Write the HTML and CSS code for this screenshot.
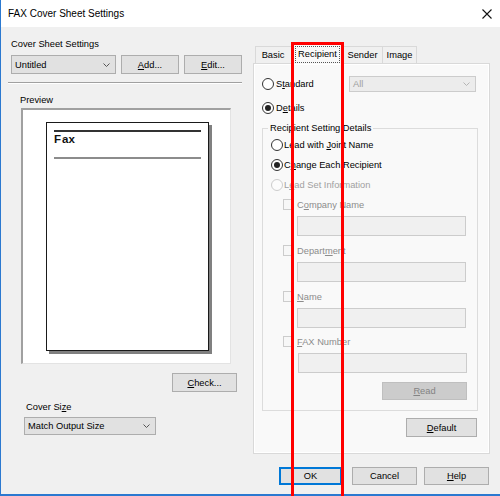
FILE: index.html
```html
<!DOCTYPE html>
<html>
<head>
<meta charset="utf-8">
<title>FAX Cover Sheet Settings</title>
<link rel="stylesheet" href="styles.css">
</head>
<body>
<div class="window">
  <div class="titlebar">
    <span class="title">FAX Cover Sheet Settings</span>
    <svg class="close" width="10" height="10" viewBox="0 0 10 10"><path d="M0.5 0.5L9.5 9.5M9.5 0.5L0.5 9.5" stroke="#111" stroke-width="1.1" fill="none"/></svg>
  </div>
  <div class="main">
    <div class="left">
      <div class="label lbl-cover">Cover Sheet Settings</div>
      <div class="row r-cover">
        <div class="select sel-untitled"><span class="seltext">Untitled</span><svg class="chev" width="7" height="4" viewBox="0 0 7 4"><polyline points="0.5,0.5 3.5,3.5 6.5,0.5" fill="none" stroke="#555" stroke-width="1"/></svg></div>
        <div class="btn btn-add"><u>A</u>dd...</div>
        <div class="btn btn-edit"><u>E</u>dit...</div>
      </div>
      <div class="sep"></div>
      <div class="label lbl-preview">Preview</div>
      <div class="preview">
        <div class="page">
          <div class="pline dark"></div>
          <div class="fax"><span class="fax-f">F</span>ax</div>
          <div class="pline gray"></div>
        </div>
      </div>
      <div class="btn btn-check"><u>C</u>heck...</div>
      <div class="label lbl-size">Cover Si<u>z</u>e</div>
      <div class="select sel-size"><span class="seltext">Match Output Size</span><svg class="chev" width="7" height="4" viewBox="0 0 7 4"><polyline points="0.5,0.5 3.5,3.5 6.5,0.5" fill="none" stroke="#555" stroke-width="1"/></svg></div>
    </div>
    <div class="right">
      <div class="tabs">
        <div class="tab t-basic">Basic</div>
        <div class="tab t-recip active"><span class="focus">Recipient</span></div>
        <div class="tab t-sender">Sender</div>
        <div class="tab t-image">Image</div>
      </div>
      <div class="panel">
        <div class="opt r-standard">
          <span class="radio"></span><span class="otext">S<u>t</u>andard</span>
          <div class="select sel-all disabled"><span class="seltext">All</span><svg class="chev" width="7" height="4" viewBox="0 0 7 4"><polyline points="0.5,0.5 3.5,3.5 6.5,0.5" fill="none" stroke="#b5b5b5" stroke-width="1"/></svg></div>
        </div>
        <div class="opt r-details"><span class="radio checked"></span><span class="otext">D<u>e</u>tails</span></div>
        <fieldset class="group">
          <legend>Recipient Setting Details</legend>
          <div class="group-body">
            <div class="opt sub o-joint"><span class="radio"></span><span class="otext">Lead with <u>J</u>oint Name</span></div>
            <div class="opt sub o-change"><span class="radio checked"></span><span class="otext">C<u>h</u>ange Each Recipient</span></div>
            <div class="opt sub o-set disabled"><span class="radio"></span><span class="otext">L<u>e</u>ad Set Information</span></div>
            <div class="chk c-first"><span class="box"></span><span class="ctext">C<u>o</u>mpany Name</span></div>
            <div class="field"></div>
            <div class="chk"><span class="box"></span><span class="ctext">Depart<u>m</u>ent</span></div>
            <div class="field"></div>
            <div class="chk"><span class="box"></span><span class="ctext"><u>N</u>ame</span></div>
            <div class="field"></div>
            <div class="chk c-fax"><span class="box"></span><span class="ctext"><u>F</u>AX Number</span></div>
            <div class="field f-fax"></div>
            <div class="btn btn-read disabled"><u>R</u>ead</div>
          </div>
        </fieldset>
        <div class="btn btn-default"><u>D</u>efault</div>
      </div>
      <div class="buttons">
        <div class="btn btn-ok">OK</div>
        <div class="btn btn-cancel">Cancel</div>
        <div class="btn btn-help"><u>H</u>elp</div>
      </div>
    </div>
  </div>
  <div class="highlight"></div>
</div>
</body>
</html>
```
FILE: styles.css
```css
* { box-sizing: border-box; }
html, body { margin: 0; padding: 0; }
body {
  width: 500px;
  height: 496px;
  overflow: hidden;
  font-family: "Liberation Sans", Arial, sans-serif;
  font-size: 9.3px;
  color: #000;
  background: #f0f0f0;
}
u { text-decoration: underline; text-underline-offset: 1px; }

.window {
  position: relative;
  width: 500px;
  height: 496px;
  border-left: 1px solid #2b79d0;
  border-bottom: 2px solid #2b79d0;
  background: #f0f0f0;
  display: flex;
  flex-direction: column;
}

.titlebar {
  height: 27px;
  background: #fff;
  display: flex;
  align-items: center;
  justify-content: space-between;
  padding: 0 8px 0 7px;
}
.title { font-size: 10px; color: #000; }
.close { display: block; margin-top: 1px; }

.main {
  display: flex;
  flex: 1;
}

/* left column */
.left {
  width: 252px;
  display: flex;
  flex-direction: column;
  align-items: flex-start;
  padding-left: 10px;
}
.label { height: 12px; line-height: 12px; white-space: nowrap; }
.lbl-cover { margin-top: 11px; }
.row { display: flex; }
.r-cover { margin-top: 5px; height: 19px; }

.select {
  display: flex;
  align-items: center;
  background: #e1e1e1;
  border: 1px solid #adadad;
  height: 19px;
}
.seltext { flex: 1; padding-left: 3px; white-space: nowrap; }
.chev { display: block; margin-right: 5px; }
.sel-untitled { width: 105px; }
.sel-size { width: 132px; height: 18px; margin-top: 4px; margin-left: 13px; }
.select.disabled { background: #ececec; border-color: #cccccc; color: #a0a0a0; }

.btn {
  display: flex;
  align-items: center;
  justify-content: center;
  background: #e1e1e1;
  border: 1px solid #adadad;
  height: 19px;
  white-space: nowrap;
}
.btn.disabled { background: #cccccc; border-color: #bfbfbf; color: #838383; }
.btn-add { width: 58px; margin-left: 5px; }
.btn-edit { width: 58px; margin-left: 5px; }

.sep {
  margin-top: 8px;
  margin-left: -3px;
  width: 234px;
  height: 2px;
  border-top: 1px solid #a0a0a0;
  border-bottom: 1px solid #fff;
}
.lbl-preview { margin-top: 10px; margin-left: 9px; }

.preview {
  margin-top: 2px;
  margin-left: 10px;
  width: 210px;
  height: 256px;
  background: #fff;
  border-top: 2px solid #a0a0a0;
  border-left: 2px solid #a0a0a0;
  border-right: 1px solid #e3e3e3;
  border-bottom: 1px solid #e3e3e3;
  padding: 12px 0 0 23px;
}
.page {
  width: 163px;
  height: 229px;
  border: 1px solid #1a1a1a;
  background: #fff;
  box-shadow: 3px 3px 0 #808080;
  padding: 7px 7px 0;
}
.pline { height: 2px; }
.pline.dark { background: #333; }
.pline.gray { background: #8c8c8c; margin-top: 11px; }
.fax {
  font-weight: bold;
  font-size: 11.5px;
  line-height: 14px;
  color: #111;
}
.fax-f { margin-right: 1px; }

.btn-check { margin-top: 9px; margin-left: 161px; width: 65px; }
.lbl-size { margin-top: 9px; margin-left: 15px; }

/* right column */
.right {
  width: 247px;
  display: flex;
  flex-direction: column;
  align-items: flex-start;
}
.tabs {
  margin-top: 16px;
  margin-left: 2px;
  height: 21px;
  margin-bottom: -1px;
  display: flex;
  align-items: flex-end;
  position: relative;
  z-index: 1;
}
.tab {
  height: 17px;
  margin-bottom: 1px;
  display: flex;
  align-items: center;
  justify-content: center;
  background: #f0f0f0;
  border: 1px solid #d9d9d9;
  border-bottom: none;
  white-space: nowrap;
}
.t-basic { width: 37px; border-right: none; padding-right: 2px; }
.t-recip { width: 51px; }
.t-sender { width: 40px; border-left: none; }
.t-image { width: 34px; border-left: none; }
.tab.active {
  height: 21px;
  margin-bottom: 0;
  background: #f9f9f9;
}
.focus {
  border: 1px dotted #555;
  padding: 1px 2px 2px;
  line-height: 12px;
}

.panel {
  width: 237px;
  height: 391px;
  border: 1px solid #d9d9d9;
  box-shadow: inset 0 0 0 1px #fff;
  background: #f9f9f9;
  display: flex;
  flex-direction: column;
  align-items: flex-start;
}

.opt { display: flex; align-items: center; height: 14px; white-space: nowrap; }
.r-standard { margin-top: 12px; height: 16px; width: 100%; }
.r-details { margin-top: 9px; }
.r-standard .radio, .r-details .radio { margin-left: 8px; }
.otext { margin-left: 2px; }

.radio {
  display: block;
  width: 12px;
  height: 12px;
  border: 1px solid #333;
  border-radius: 50%;
  background: #fff;
  position: relative;
}
.radio.checked::after {
  content: "";
  position: absolute;
  left: 2px;
  top: 2px;
  width: 6px;
  height: 6px;
  border-radius: 50%;
  background: #222;
}
.opt.disabled { color: #a0a0a0; }
.opt.disabled .radio { border-color: #cccccc; background: #fcfcfc; }

.sel-all { margin-left: auto; margin-right: 13px; width: 127px; height: 16px; }

.group {
  margin: 7px 0 0 8px;
  width: 216px;
  padding: 0 0 10px 8px;
  border: 1px solid #dcdcdc;
  min-width: 0;
}
.group legend {
  padding: 0 2px;
  margin-left: -3px;
  line-height: 12px;
  height: 12px;
  white-space: nowrap;
}
.group-body {
  display: flex;
  flex-direction: column;
  align-items: flex-start;
}
.o-joint { margin-top: 4px; }
.o-change, .o-set { margin-top: 6px; }
.sub .otext { margin-left: 1px; }

.chk {
  display: flex;
  align-items: center;
  height: 13px;
  margin-top: 8px;
  margin-left: 12px;
  color: #8c8c8c;
  white-space: nowrap;
}
.chk.c-first { margin-top: 6px; }
.chk.c-fax { margin-top: 7px; }
.box {
  display: block;
  width: 11px;
  height: 11px;
  border: 1px solid #cccccc;
  background: #f7f7f7;
}
.ctext { margin-left: 3px; }

.field {
  margin-top: 5px;
  margin-left: 26px;
  width: 169px;
  height: 20px;
  border: 1px solid #cccccc;
  background: #f0f0f0;
}
.field.f-fax { margin-left: 27px; }

.btn-read { margin-top: 9px; margin-left: 111px; width: 85px; height: 18px; }
.btn-default { margin-top: 7px; margin-left: 152px; width: 71px; }

.buttons {
  display: flex;
  margin-top: 13px;
  margin-left: 26px;
}
.buttons .btn { height: 18px; }
.btn-ok { width: 63px; border-color: #0078d7; box-shadow: inset 0 0 0 1px #0078d7; }
.btn-cancel { width: 65px; margin-left: 10px; }
.btn-help { width: 65px; margin-left: 7px; }

.highlight {
  position: absolute;
  left: 290px;
  top: 42px;
  width: 53px;
  bottom: -2px;
  border: 3px solid #ff0000;
  border-bottom: none;
  z-index: 5;
}
```
